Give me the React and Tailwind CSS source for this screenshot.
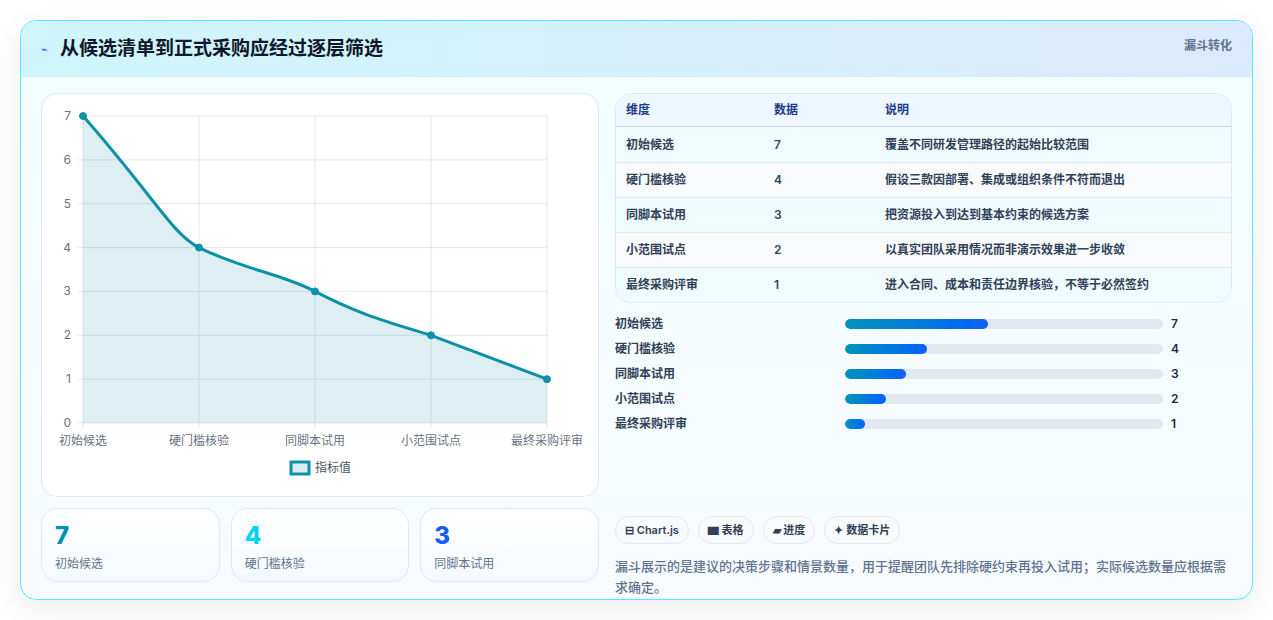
import React from "react";

const rows = [
  ["初始候选", 7, "覆盖不同研发管理路径的起始比较范围"],
  ["硬门槛核验", 4, "假设三款因部署、集成或组织条件不符而退出"],
  ["同脚本试用", 3, "把资源投入到达到基本约束的候选方案"],
  ["小范围试点", 2, "以真实团队采用情况而非演示效果进一步收敛"],
  ["最终采购评审", 1, "进入合同、成本和责任边界核验，不等于必然签约"],
];

function Chart() {
  const xs = [41, 157, 273, 389, 505];
  const y = (v) => 22 + (7 - v) * 43.86;
  const vals = [7, 4, 3, 2, 1];
  const pts = vals.map((v, i) => [xs[i], y(v)]);
  const line = "M41,22 C110,100 130,140 157,153.6 C200,175 240,180 273,197.4 C320,222 350,229 389,241.3 L505,285.1";
  return (
    <svg width="556" height="402" className="block">
      {[0, 1, 2, 3, 4, 5, 6, 7].map((v) => (
        <g key={v}>
          <line x1="36" x2="505" y1={y(v)} y2={y(v)} stroke="#e5e7eb" />
          <text x="29" y={y(v) + 4} textAnchor="end" fontSize="12" fill="#6b7280">{v}</text>
        </g>
      ))}
      {xs.map((x) => (
        <line key={x} x1={x} x2={x} y1="22" y2="334" stroke="#e5e7eb" />
      ))}
      <path d={line + " L505,329 L41,329 Z"} fill="#0e91a8" fillOpacity="0.14" />
      <path d={line} fill="none" stroke="#0e91a8" strokeWidth="3" />
      {pts.map(([px, py], i) => (
        <circle key={i} cx={px} cy={py} r="3.5" fill="#0e91a8" stroke="#0e91a8" />
      ))}
      {rows.map((r, i) => (
        <text key={i} x={xs[i]} y="351" textAnchor="middle" fontSize="12" fill="#6b7280">{r[0]}</text>
      ))}
      <rect x="249" y="368" width="18" height="12" fill="#dbeef3" stroke="#0e91a8" strokeWidth="3" />
      <text x="273" y="378" fontSize="12" fill="#4b5563">指标值</text>
    </svg>
  );
}

export default function App() {
  return (
    <div className="w-[1273px] h-[620px] bg-white p-5" style={{ fontFamily: "Inter, 'Noto Sans CJK SC', sans-serif" }}>
      <div className="rounded-2xl border border-cyan-300 overflow-hidden bg-gradient-to-b from-[#f2feff] to-[#f8fbff] shadow-[0_10px_30px_rgba(0,0,0,0.08)] h-[580px]">
        <div className="h-[56px] bg-gradient-to-r from-[#cff5fb] to-[#dbeafe] flex items-center justify-between px-5">
          <div className="flex items-center gap-3">
            <span className="text-[11px] text-blue-600">⌁</span>
            <span className="text-[19px] font-bold text-[#0f172a]">从候选清单到正式采购应经过逐层筛选</span>
          </div>
          <span className="text-[12px] font-bold text-slate-500 self-start mt-4">漏斗转化</span>
        </div>
        <div className="flex gap-4 px-5 pt-4">
          <div className="w-[558px] flex flex-col gap-[11px]">
            <div className="h-[404px] rounded-2xl border border-slate-200 bg-white">
              <Chart />
            </div>
            <div className="grid grid-cols-3 gap-[11px]">
              {[["7", "text-cyan-600", "初始候选"], ["4", "text-cyan-400", "硬门槛核验"], ["3", "text-blue-600", "同脚本试用"]].map(([n, c, l]) => (
                <div key={l} className="h-[74px] rounded-2xl border border-blue-100 bg-gradient-to-b from-white to-[#f5f9ff] px-[13px] pt-[12px]">
                  <div className={`text-[24px] font-extrabold leading-[30px] ${c}`}>{n}</div>
                  <div className="text-[12px] text-slate-500 mt-1">{l}</div>
                </div>
              ))}
            </div>
          </div>
          <div className="w-[619px] flex flex-col">
            <div className="rounded-2xl border border-slate-200 overflow-hidden text-[12px]">
              <div className="flex h-[33px] items-center bg-[#eef6ff] border-b border-slate-300 text-[#1e3a8a] font-semibold px-[10px]">
                <span className="w-[148px]">维度</span><span className="w-[111px]">数据</span><span>说明</span>
              </div>
              {rows.map((r, i) => (
                <div key={i} className={`flex h-[35px] items-center px-[10px] text-slate-700 font-semibold ${i ? "border-t border-slate-200" : ""} ${i % 2 ? "bg-[#f8fafc]" : "bg-[#effcff]"}`}>
                  <span className="w-[148px]">{r[0]}</span><span className="w-[111px]">{r[1]}</span><span>{r[2]}</span>
                </div>
              ))}
            </div>
            <div className="flex flex-col gap-[7px] mt-[12px]">
              {rows.map((r, i) => (
                <div key={i} className="flex items-center h-[18px] text-[12px] font-semibold text-slate-700">
                  <span className="w-[230px]">{r[0]}</span>
                  <div className="w-[318px] h-[10px] rounded-full bg-slate-200 overflow-hidden">
                    <div className="h-full rounded-full bg-gradient-to-r from-cyan-600 to-blue-600" style={{ width: `${r[1] * 6.43}%` }} />
                  </div>
                  <span className="ml-[8px] text-slate-800">{r[1]}</span>
                </div>
              ))}
            </div>
            <div className="flex gap-[9px] mt-[83px] text-[11px] font-semibold text-slate-700">
              {["⊟ Chart.js", "▆ 表格", "▰ 进度", "✦ 数据卡片"].map((t) => (
                <span key={t} className="h-[28px] px-[9px] flex items-center rounded-full border border-slate-200 bg-[#f8fafc]">{t}</span>
              ))}
            </div>
            <p className="mt-[12px] text-[13px] leading-[21px] text-slate-500 font-medium">漏斗展示的是建议的决策步骤和情景数量，用于提醒团队先排除硬约束再投入试用；实际候选数量应根据需求确定。</p>
          </div>
        </div>
      </div>
    </div>
  );
}
